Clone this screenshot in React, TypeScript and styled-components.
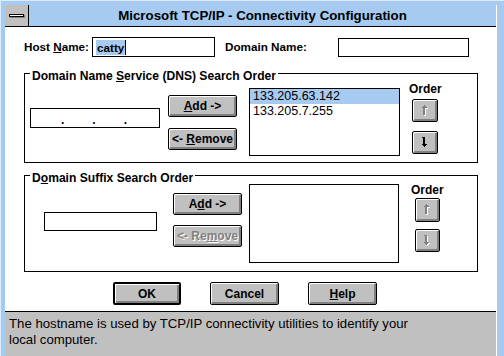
import React from "react";
import styled, { createGlobalStyle } from "styled-components";

const FONT = `"Liberation Sans", Arial, sans-serif`;

const Global = createGlobalStyle`
  html, body { margin: 0; padding: 0; }
  body {
    width: 504px; height: 356px; overflow: hidden;
    background: #a6caf0; font-family: ${FONT};
  }
  #root { width: 504px; height: 356px; }
`;

const Frame = styled.div`
  box-sizing: border-box;
  width: 504px; height: 356px;
  background: #a6caf0;
  border-top: 1px solid #dcebfa;
  border-left: 1px solid #dcebfa;
  padding: 4px 7px 0 4px;
  display: flex;
`;

const Window = styled.div`
  flex: 1;
  min-width: 0;
  display: flex;
  flex-direction: column;
  border-right: 1px solid #ffffff;
`;

const TitleBar = styled.div`
  height: 21px;
  flex: none;
  display: flex;
  background: #a6caf0;
  border-bottom: 1px solid #000;
`;

const SysMenu = styled.div`
  width: 23px;
  background: #c0c0c0;
  border-right: 1px solid #000;
  display: flex;
  align-items: center;
  justify-content: center;
`;

const SysBar = styled.span`
  box-sizing: border-box;
  width: 15px; height: 3px;
  background: #fff;
  border: 1px solid #000;
  box-shadow: 1px 1px 0 #808080;
`;

const Title = styled.div`
  flex: 1;
  text-align: center;
  font: bold 13.3px/21px ${FONT};
  color: #000;
`;

const Client = styled.div`
  box-sizing: border-box;
  height: 284px;
  flex: none;
  background: #fff;
  padding: 10px 0 0 19px;
  display: flex;
  flex-direction: column;
`;

const Row = styled.div`
  display: flex;
  align-items: center;
  height: 20px;
`;

const Label = styled.span<{ $w: number; $ml?: number }>`
  width: ${(p) => p.$w}px;
  margin-left: ${(p) => p.$ml ?? 0}px;
  font: bold 11.7px/14px ${FONT};
  color: #000;
  white-space: nowrap;
`;

const Key = styled.span`
  text-decoration: underline;
  text-underline-offset: 1px;
`;

const TextBox = styled.div<{ $w: number; $h?: number; $ml?: number; $mt?: number }>`
  box-sizing: border-box;
  flex: none;
  width: ${(p) => p.$w}px;
  height: ${(p) => p.$h ?? 20}px;
  margin-left: ${(p) => p.$ml ?? 0}px;
  margin-top: ${(p) => p.$mt ?? 0}px;
  background: #fff;
  border: 1px solid #000;
  display: flex;
  align-items: center;
  font: bold 11.7px/14px ${FONT};
`;

const Selected = styled.span`
  margin-left: 3px;
  padding: 0 1px;
  background: #a6caf0;
  line-height: 15px;
  border-right: 1px solid #000;
`;

const Dots = styled.div`
  display: flex;
  gap: 28px;
  padding-left: 30px;
  margin-top: 4px;
  font: bold 12px ${FONT};
`;

const Group = styled.div<{ $h: number; $mt: number }>`
  position: relative;
  box-sizing: border-box;
  width: 454px;
  height: ${(p) => p.$h}px;
  margin-top: ${(p) => p.$mt}px;
  border: 1px solid #000;
  display: flex;
  align-items: flex-start;
`;

const Legend = styled.span`
  position: absolute;
  top: -5px;
  left: 5px;
  padding: 0 2px;
  background: #fff;
  font: bold 12.1px/14px ${FONT};
  color: #000;
  white-space: nowrap;
`;

const ButtonCol = styled.div<{ $ml: number; $mt: number; $gap: number }>`
  display: flex;
  flex-direction: column;
  gap: ${(p) => p.$gap}px;
  margin-left: ${(p) => p.$ml}px;
  margin-top: ${(p) => p.$mt}px;
`;

const Button = styled.button<{ $w: number; $h?: number; $default?: boolean; $off?: boolean }>`
  box-sizing: border-box;
  width: ${(p) => p.$w}px;
  height: ${(p) => p.$h ?? 22}px;
  margin: 0;
  padding: 0;
  background: #c0c0c0;
  border: ${(p) => (p.$default ? 2 : 1)}px solid #000;
  border-radius: 2px;
  box-shadow: inset 1px 1px 0 #fff, inset -2px -2px 0 #808080;
  display: flex;
  align-items: center;
  justify-content: center;
  font: bold 12px/14px ${FONT};
  color: ${(p) => (p.$off ? "#808080" : "#000")};
  text-shadow: ${(p) => (p.$off ? "1px 1px 0 #fff" : "none")};
  white-space: pre;
`;

const ListBox = styled.div<{ $w: number; $h: number; $ml: number; $mt: number }>`
  box-sizing: border-box;
  width: ${(p) => p.$w}px;
  height: ${(p) => p.$h}px;
  margin-left: ${(p) => p.$ml}px;
  margin-top: ${(p) => p.$mt}px;
  border: 1px solid #000;
  background: #fff;
  display: flex;
  flex-direction: column;
`;

const ListItem = styled.div<{ $sel?: boolean }>`
  height: 15px;
  padding-left: 3px;
  background: ${(p) => (p.$sel ? "#a6caf0" : "transparent")};
  font: 12.5px/15px ${FONT};
  color: #000;
`;

const OrderCol = styled.div<{ $ml: number; $mt: number; $gap: number; $first: number }>`
  display: flex;
  flex-direction: column;
  align-items: center;
  margin-left: ${(p) => p.$ml}px;
  margin-top: ${(p) => p.$mt}px;
  & > button:first-of-type { margin-top: ${(p) => p.$first}px; }
  & > button + button { margin-top: ${(p) => p.$gap}px; }
`;

const OrderLabel = styled.span`
  font: bold 12px/14px ${FONT};
  color: #000;
`;

const Footer = styled.div`
  display: flex;
  gap: 29px;
  margin-top: 10px;
  padding-left: 89px;
`;

const Status = styled.div`
  flex: 1;
  background: #c0c0c0;
  border-top: 1px solid #000;
  padding: 4px 0 0 4px;
  font: 13.2px/16px ${FONT};
  color: #000;
`;

const UpArrow = ({ off }: { off?: boolean }) => {
  const d = "M3 0 L0 3 H2 V10 H4 V3 H6 Z";
  return (
    <svg width="8" height="12" viewBox="0 0 8 12" shapeRendering="crispEdges">
      {off && <path d={d} fill="#fff" transform="translate(1,1)" />}
      <path d={d} fill={off ? "#808080" : "#000"} />
    </svg>
  );
};

const DownArrow = ({ off }: { off?: boolean }) => {
  const d = "M3 10 L0 7 H2 V0 H4 V7 H6 Z M1 0 H2 V1 H1 Z";
  return (
    <svg width="8" height="12" viewBox="0 0 8 12" shapeRendering="crispEdges">
      {off && <path d={d} fill="#fff" transform="translate(1,1)" />}
      <path d={d} fill={off ? "#808080" : "#000"} />
    </svg>
  );
};

export default function App() {
  return (
    <>
      <Global />
      <Frame>
        <Window>
          <TitleBar>
            <SysMenu>
              <SysBar />
            </SysMenu>
            <Title>Microsoft TCP/IP - Connectivity Configuration</Title>
          </TitleBar>
          <Client>
            <Row>
              <Label $w={68}>
                Host <Key>N</Key>ame:
              </Label>
              <TextBox $w={123}>
                <Selected>catty</Selected>
              </TextBox>
              <Label $w={113} $ml={10}>
                Domain Name:
              </Label>
              <TextBox $w={131} $h={19} />
            </Row>

            <Group $h={90} $mt={16}>
              <Legend>
                Domain Name <Key>S</Key>ervice (DNS) Search Order
              </Legend>
              <TextBox $w={130} $ml={5} $mt={34}>
                <Dots>
                  <span>.</span>
                  <span>.</span>
                  <span>.</span>
                </Dots>
              </TextBox>
              <ButtonCol $ml={8} $mt={21} $gap={11}>
                <Button $w={69}>
                  <Key>A</Key>dd -&gt;
                </Button>
                <Button $w={69}>
                  &lt;- <Key>R</Key>emove
                </Button>
              </ButtonCol>
              <ListBox $w={151} $h={68} $ml={12} $mt={14}>
                <ListItem $sel>133.205.63.142</ListItem>
                <ListItem>133.205.7.255</ListItem>
              </ListBox>
              <OrderCol $ml={9} $mt={8} $first={3} $gap={9}>
                <OrderLabel>Order</OrderLabel>
                <Button $w={26} $h={23}>
                  <UpArrow off />
                </Button>
                <Button $w={26} $h={23}>
                  <DownArrow />
                </Button>
              </OrderCol>
            </Group>

            <Group $h={97} $mt={12}>
              <Legend>
                D<Key>o</Key>main Suffix Search Order
              </Legend>
              <TextBox $w={113} $h={19} $ml={19} $mt={36} />
              <ButtonCol $ml={16} $mt={17} $gap={10}>
                <Button $w={69}>
                  A<Key>d</Key>d -&gt;
                </Button>
                <Button $w={69} $off>
                  &lt;- Re<Key>m</Key>ove
                </Button>
              </ButtonCol>
              <ListBox $w={150} $h={79} $ml={7} $mt={8} />
              <OrderCol $ml={12} $mt={7} $first={1} $gap={7}>
                <OrderLabel>Order</OrderLabel>
                <Button $w={25} $h={24}>
                  <UpArrow off />
                </Button>
                <Button $w={25} $h={23}>
                  <DownArrow off />
                </Button>
              </OrderCol>
            </Group>

            <Footer>
              <Button $w={68} $h={23} $default>
                OK
              </Button>
              <Button $w={69} $h={23}>
                Cancel
              </Button>
              <Button $w={69} $h={23}>
                <Key>H</Key>elp
              </Button>
            </Footer>
          </Client>
          <Status>
            The hostname is used by TCP/IP connectivity utilities to identify your
            <br />
            local computer.
          </Status>
        </Window>
      </Frame>
    </>
  );
}
